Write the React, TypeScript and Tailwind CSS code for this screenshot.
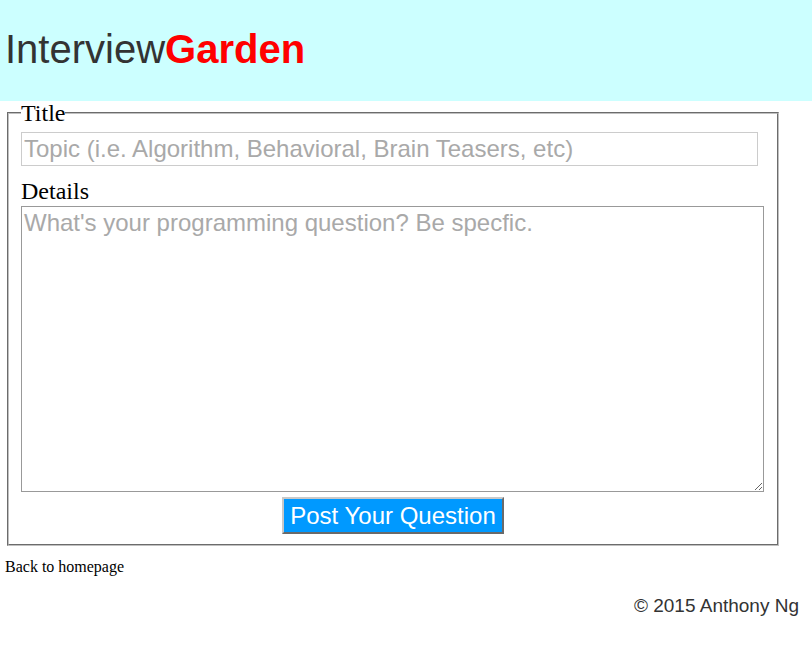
import React from "react";

const sans = "font-['Liberation_Sans',Arial,sans-serif]";
const serif = "font-['Liberation_Serif','Times_New_Roman',serif]";

export default function App() {
  return (
    <div className={`min-h-screen bg-white text-black ${serif}`}>
      {/* Header */}
      <header className="bg-[#ccffff] pt-[26px] pb-[29px] pl-[5px]">
        <h1 className={`text-[40px] leading-[46px] text-[#333333] ${sans}`}>
          Interview<span className="font-bold text-[#ff0000]">Garden</span>
        </h1>
      </header>

      {/* Question form */}
      <form onSubmit={(e) => e.preventDefault()}>
        <fieldset className="ml-[7px] w-[772px] border-2 border-[#c0c0c0] [border-style:groove] pl-[12px] pr-[12px] pb-[10px]">
          <legend className="text-[24px] leading-[24px]">Title</legend>
          <input
            type="text"
            placeholder="Topic (i.e. Algorithm, Behavioral, Brain Teasers, etc)"
            className={`mt-[7px] block w-[737px] h-[34px] border border-[#cccccc] px-[2px] text-[24px] outline-none placeholder:text-[#a9a9a9] ${sans}`}
          />
          <label className="mt-[11px] block text-[24px] leading-[28px]">Details</label>
          <textarea
            placeholder="What's your programming question? Be specfic."
            className={`mt-[1px] block w-[743px] h-[286px] border border-[#999999] px-[2px] py-[2px] text-[24px] leading-[28px] outline-none placeholder:text-[#a9a9a9] ${sans}`}
          />
          <div className="mt-[5px] flex justify-center">
            <button
              type="submit"
              className={`bg-[#0099ff] text-white text-[24px] leading-[27px] px-[6px] py-[3px] border-2 border-t-[#c8c8c8] border-l-[#c8c8c8] border-b-[#6a6a6a] border-r-[#6a6a6a] ${sans}`}
            >
              Post Your Question
            </button>
          </div>
        </fieldset>
      </form>

      <p className="mt-[12px] pl-[5px] text-[16px] leading-[18px]">Back to homepage</p>

      {/* Footer */}
      <footer className={`mt-[19px] pr-[13px] text-right text-[19px] leading-[22px] text-[#333333] ${sans}`}>
        © 2015 Anthony Ng
      </footer>
    </div>
  );
}
